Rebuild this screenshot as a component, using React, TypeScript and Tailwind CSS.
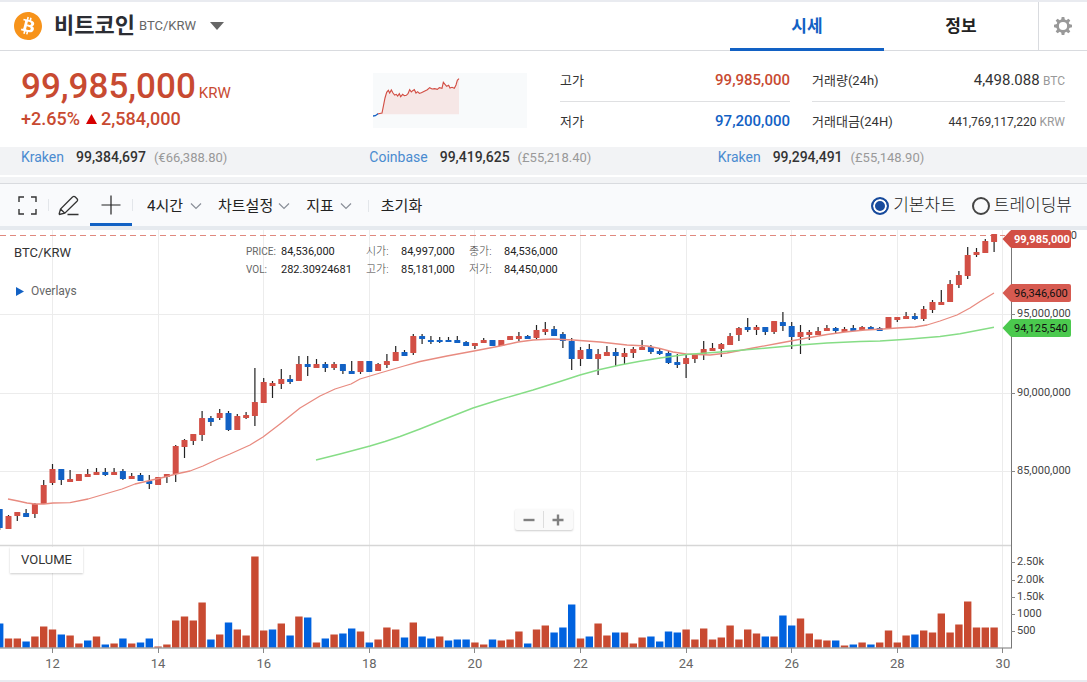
import { SiBitcoin } from "react-icons/si";

// side, body top, body bottom, wick top, wick bottom
type Candle = ["r" | "b", number, number, number, number];

const STEP = 8.8;
const BASE_Y = 647.5;

const candles: Candle[] = [
  ["b", 509, 528, 509, 530], ["r", 516, 529, 515, 529], ["r", 512, 516, 512, 521], ["b", 513, 517, 509, 517],
  ["r", 504, 514, 503, 518], ["r", 485, 504, 480, 504], ["r", 469, 483, 464, 485], ["b", 469, 480, 469, 485],
  ["r", 479, 482, 470, 482], ["r", 474, 481, 474, 481], ["r", 474, 477, 469, 477], ["r", 472, 475, 468, 475],
  ["b", 472, 475, 468, 476], ["r", 472, 475, 468, 475], ["b", 471, 479, 469, 480], ["r", 476, 479, 473, 479],
  ["b", 475, 481, 473, 481], ["b", 481, 484, 475, 489], ["r", 477, 485, 477, 485], ["r", 474, 477, 474, 483],
  ["r", 446, 474, 445, 482], ["r", 440, 447, 439, 458], ["r", 434, 441, 434, 445], ["r", 418, 435, 411, 441],
  ["b", 418, 422, 416, 426], ["r", 413, 418, 409, 420], ["b", 413, 430, 411, 431], ["r", 416, 430, 414, 430],
  ["r", 415, 418, 412, 419], ["r", 402, 416, 368, 426], ["r", 382, 403, 378, 403], ["r", 383, 386, 381, 398],
  ["r", 379, 384, 369, 389], ["b", 379, 382, 375, 384], ["r", 364, 381, 356, 381], ["b", 364, 367, 356, 376],
  ["r", 364, 368, 359, 368], ["b", 364, 368, 362, 372], ["r", 364, 368, 362, 370], ["b", 364, 371, 364, 374],
  ["b", 371, 374, 361, 374], ["r", 361, 372, 361, 374], ["b", 361, 372, 361, 372], ["r", 364, 371, 363, 371],
  ["r", 361, 365, 354, 368], ["r", 352, 361, 346, 361], ["b", 352, 356, 350, 356], ["r", 336, 353, 334, 355],
  ["b", 336, 339, 334, 344], ["b", 340, 342, 336, 344], ["b", 340, 342, 337, 343], ["b", 340, 342, 337, 342],
  ["b", 340, 343, 336, 343], ["b", 342, 346, 341, 346], ["r", 343, 346, 343, 349], ["r", 340, 343, 338, 343],
  ["b", 340, 346, 340, 346], ["r", 340, 346, 340, 346], ["r", 336, 340, 336, 340], ["r", 336, 339, 332, 341],
  ["b", 336, 339, 335, 339], ["r", 330, 338, 325, 339], ["r", 329, 332, 322, 335], ["b", 329, 336, 326, 336],
  ["b", 334, 341, 332, 348], ["b", 341, 359, 338, 370], ["r", 350, 359, 347, 366], ["b", 349, 359, 344, 359],
  ["r", 354, 359, 349, 375], ["r", 352, 356, 346, 356], ["b", 352, 356, 348, 366], ["r", 353, 357, 348, 364],
  ["r", 349, 353, 347, 358], ["r", 347, 350, 340, 350], ["b", 347, 352, 345, 354], ["b", 351, 354, 349, 355],
  ["b", 353, 363, 351, 364], ["b", 362, 365, 354, 368], ["r", 358, 364, 355, 378], ["r", 354, 359, 354, 363],
  ["r", 349, 354, 341, 360], ["r", 348, 351, 343, 351], ["r", 344, 349, 343, 357], ["r", 336, 345, 333, 345],
  ["r", 328, 335, 327, 341], ["b", 327, 330, 318, 332], ["r", 327, 330, 325, 335], ["b", 327, 332, 327, 335],
  ["r", 321, 332, 321, 334], ["b", 322, 326, 312, 331], ["b", 326, 337, 322, 349], ["r", 332, 337, 325, 354],
  ["r", 332, 335, 330, 340], ["r", 331, 335, 327, 335], ["r", 328, 331, 325, 331], ["b", 328, 331, 327, 334],
  ["r", 329, 332, 327, 332], ["b", 328, 331, 325, 331], ["r", 327, 330, 326, 331], ["b", 327, 330, 326, 330],
  ["b", 328, 331, 327, 331], ["r", 317, 329, 317, 329], ["r", 317, 320, 317, 322], ["r", 316, 319, 312, 319],
  ["b", 316, 319, 313, 320], ["r", 309, 319, 306, 321], ["r", 302, 310, 300, 313], ["r", 302, 305, 290, 305],
  ["r", 284, 302, 280, 302], ["r", 275, 285, 271, 288], ["r", 255, 276, 247, 279], ["r", 252, 255, 248, 257],
  ["r", 241, 253, 239, 253], ["r", 234, 242, 234, 252],
];

const volumes = (
  "b24 r9 r9 b6 r11 r21 r18 b13 r12 r4 b7 r11 b3 r4 b9 r4 b5 b9 r1 r3 r27 r31 r27 r45 b8 r13 b25 r18 r12 r91 " +
  "r17 b18 r24 b12 r31 b30 r5 b9 r13 b14 b19 r16 b5 r8 r20 r18 b10 r25 b11 b9 r11 b7 b8 b8 r5 r3 b8 r7 r8 r16 " +
  "b4 r18 r22 b15 b20 b43 r9 b11 r24 r12 b15 r15 r4 r10 b11 b6 b16 b15 r18 r8 r19 r8 r10 r22 r8 r18 r14 b11 r11 b32 " +
  "b22 r29 r14 r8 r7 b7 r2 b3 r5 b3 r5 r17 r5 r12 b13 r17 r15 r34 r15 r23 r46 r20 r20 r20"
).split(" ");

const maShort =
  "8,499 18,501 27,503 35,504 44,504 53,503 70,502.7 88,499 105,494 122,489 135,484 152,480 165,477 176,474 190,471 203,466 218,459 230,454 250,445 263,437 280,424 300,408 320,396 335,389 351,384 360,379 380,373 404,366 420,361.5 447,356 474,351 500,346 518,342 533,340 553,339 573,340 600,342 627,345 647,346 660,348.5 673,352 686,354 710,355 727,353 753,348 780,343 807,338 827,334.5 845,332 865,330 883,329 897,328 915,327 927,325 940,321 957,315 970,308 980,301.5 994,293";
const maLong =
  "316,460 340,454 370,446 385,441.5 400,436.5 420,429 445,419 473,408 500,399.5 533,390 560,381.5 580,375 600,369.5 620,365 640,361.3 660,358 686,354.5 720,352 767,348 800,345 827,343 860,341.5 880,341 907,339.3 940,336.5 960,333.7 994,327.3";

const days = [12, 14, 16, 18, 20, 22, 24, 26, 28, 30];
const priceTicks = [
  { y: 236, label: "100,000,000" },
  { y: 314, label: "95,000,000" },
  { y: 393, label: "90,000,000" },
  { y: 471, label: "85,000,000" },
];
const volumeTicks = [
  { y: 562, label: "2.50k" },
  { y: 580, label: "2.00k" },
  { y: 597, label: "1.50k" },
  { y: 614, label: "1000" },
  { y: 631, label: "500" },
];
const tags = [
  { y: 239, label: "99,985,000", fill: "#d24f45", text: "#ffffff", weight: 700 },
  { y: 293, label: "96,346,600", fill: "#d65a50", text: "#111111", weight: 400 },
  { y: 328, label: "94,125,540", fill: "#4bc94e", text: "#111111", weight: 400 },
];

const exchanges = [
  { name: "Kraken", price: "99,384,697", local: "(€66,388.80)" },
  { name: "Coinbase", price: "99,419,625", local: "(£55,218.40)" },
  { name: "Kraken", price: "99,294,491", local: "(£55,148.90)" },
];

const quotes = [
  [
    { label: "시가:", value: "84,997,000" },
    { label: "종가:", value: "84,536,000" },
  ],
  [
    { label: "고가:", value: "85,181,000" },
    { label: "저가:", value: "84,450,000" },
  ],
];

function Chevron() {
  return (
    <svg className="h-3 w-3 shrink-0" viewBox="0 0 12 12" fill="none" stroke="#8a8f98" strokeWidth="1.2" aria-hidden="true">
      <path d="M1 3.5l5 5 5-5" />
    </svg>
  );
}

function Gear() {
  return (
    <svg className="h-5 w-5" viewBox="-10 -10 20 20" fill="none" stroke="#999999" aria-hidden="true">
      <circle r="5.4" strokeWidth="2.6" />
      {[0, 45, 90, 135, 180, 225, 270, 315].map((a) => (
        <path key={a} d="M-1.9 -6L-1.3 -9H1.3L1.9 -6Z" fill="#999999" stroke="none" transform={`rotate(${a})`} />
      ))}
    </svg>
  );
}

function Header() {
  return (
    <header className="flex h-[51px] border-t-2 border-b border-t-[#e9ebf0] border-b-[#d9dbdf]">
      <div className="flex flex-1 items-center pl-[14px]">
        <SiBitcoin className="h-7 w-7 shrink-0 text-[#f7931a]" aria-hidden="true" />
        <h1 className="ml-3 text-[22px] leading-7 font-bold text-[#2b2d33]">비트코인</h1>
        <span className="ml-1 text-[13px] text-[#666666]">BTC/KRW</span>
        <button type="button" aria-label="코인 선택" className="ml-[14px]">
          <svg className="h-2 w-[14px]" viewBox="0 0 14 8" aria-hidden="true">
            <path d="M0 0H14L7 8Z" fill="#666666" />
          </svg>
        </button>
      </div>
      <nav className="-mb-px flex text-[17px] font-bold">
        <a href="#price" className="flex w-[154px] items-center justify-center border-b-3 border-[#1261c4] pt-[3px] text-[#1261c4]">
          시세
        </a>
        <a href="#info" className="flex w-[154px] items-center justify-center text-[#222222]">
          정보
        </a>
      </nav>
      <button type="button" aria-label="설정" className="flex w-[49px] items-center justify-center border-l border-[#d9dbdf]">
        <Gear />
      </button>
    </header>
  );
}

function Sparkline() {
  const line =
    "52,163 66,160 70,140 75,115 80,98 85,92 89,100 94,91 99,100 104,106 109,104 113,109 118,102 122,111 128,104 133,108 139,107 144,102 149,90 154,97 158,93 163,90 168,100 173,96 178,101 184,99 190,96 196,93 202,90 209,84 216,88 224,87 232,89 238,84 246,86 250,68 255,74 260,80 266,77 270,85 276,83 283,86 288,76 292,62 297,57";
  return (
    <svg className="mt-[22px] h-[55px] w-[154px] shrink-0 bg-[#f8fafb]" viewBox="39 40 462 165" fill="none" aria-hidden="true">
      <polygon points={`${line} 297,164 52,164`} fill="#f6e7e6" />
      <polyline points={line} stroke="#d24f45" strokeWidth="3.4" />
      <path d="M39 169L46 168L54 162" stroke="#1261c4" strokeWidth="4" />
    </svg>
  );
}

function Summary() {
  return (
    <section className="flex items-start pr-[22px] pb-[6px] pl-[21px]">
      <div className="w-[352px] shrink-0 pt-4 text-[#c84a31]">
        <p className="flex h-10 items-baseline gap-[3px]">
          <strong className="text-[35px] leading-10 font-medium">99,985,000</strong>
          <span className="text-[15px] leading-none">KRW</span>
        </p>
        <p className="flex items-center text-lg leading-6 font-medium">
          +2.65%
          <svg className="mr-1 ml-[6px] h-[10px] w-[11px]" viewBox="0 0 11 10" aria-hidden="true">
            <path d="M5.5 0L11 10H0Z" fill="#d60000" />
          </svg>
          2,584,000
        </p>
      </div>
      <Sparkline />
      <div className="mt-[9px] ml-[33px] grid flex-1 grid-cols-[10fr_11fr] gap-x-[22px] text-[13px] text-[#333333]">
        <dl>
          <div className="flex h-[42px] items-center justify-between border-b border-[#dfe0e2]">
            <dt>고가</dt>
            <dd className="text-[15px] font-medium text-[#c84a31]">99,985,000</dd>
          </div>
          <div className="flex h-[39px] items-center justify-between">
            <dt>저가</dt>
            <dd className="text-[15px] font-medium text-[#1261c4]">97,200,000</dd>
          </div>
        </dl>
        <dl>
          <div className="flex h-[42px] items-center justify-between border-b border-[#dfe0e2]">
            <dt>거래량(24h)</dt>
            <dd>
              <span className="text-[15px]">4,498.088</span> <span className="text-xs text-[#999999]">BTC</span>
            </dd>
          </div>
          <div className="flex h-[39px] items-center justify-between">
            <dt>거래대금(24H)</dt>
            <dd className="text-xs">
              441,769,117,220 <span className="text-[#999999]">KRW</span>
            </dd>
          </div>
        </dl>
      </div>
    </section>
  );
}

function Toolbar() {
  return (
    <div className="flex h-[47px] items-stretch border-t border-b-4 border-t-[#d9dbdf] border-b-[#e6eaef] bg-[#f9fafc] pr-[15px] pl-[7px] text-[15px] text-[#222222]">
      <button type="button" aria-label="전체화면" className="flex w-[41px] items-center justify-center">
        <svg className="h-[19px] w-[19px]" viewBox="0 0 19 19" fill="none" stroke="#333333" strokeWidth="1.4" aria-hidden="true">
          <path d="M1 6V1H6M13 1H18V6M18 13V18H13M6 18H1V13" />
        </svg>
      </button>
      <span className="h-3 w-px self-center bg-[#e3e6ea]" />
      <button type="button" aria-label="그리기" className="flex w-[41px] items-center justify-center pr-[2px]">
        <svg className="h-[21px] w-[21px]" viewBox="0 0 21 21" fill="none" stroke="#333333" strokeWidth="1.3" aria-hidden="true">
          <path d="M1 19.5L2.5 14L14.5 2Q16 .7 17.3 2L19 3.7Q20.2 5 19 6.3L6.8 18.2L1 19.5M2.5 14L6.8 18.2M9.5 19.5H20.5" />
        </svg>
      </button>
      <button type="button" aria-label="십자선" className="flex w-[42px] items-center justify-center border-b-3 border-[#1261c4] pt-[3px]">
        <svg className="h-5 w-5" viewBox="0 0 20 20" stroke="#222222" strokeWidth="1.2" aria-hidden="true">
          <path d="M10 .5V19.5M.5 10H19.5" />
        </svg>
      </button>
      <span className="h-3 w-px self-center bg-[#e3e6ea]" />
      <div className="flex items-center pt-[2px] pl-[14px]">
        <label className="flex items-center gap-[6px]">
          <select aria-label="시간 간격" defaultValue="4h" className="appearance-none bg-transparent">
            <option value="4h">4시간</option>
          </select>
          <Chevron />
        </label>
        <button type="button" aria-haspopup="menu" className="ml-4 flex items-center gap-[5px]">
          차트설정
          <Chevron />
        </button>
        <button type="button" aria-haspopup="menu" className="ml-4 flex items-center gap-[6px]">
          지표
          <Chevron />
        </button>
        <span className="ml-4 h-3 w-px bg-[#e3e6ea]" />
        <button type="button" className="ml-3">
          초기화
        </button>
      </div>
      <div className="ml-auto flex items-center gap-4 pt-[2px] text-[17px] font-light">
        <label className="flex items-center gap-1">
          <input
            type="radio"
            name="chart"
            defaultChecked
            className="h-[18px] w-[18px] appearance-none rounded-full border-2 border-[#333333] checked:border-[#174a9c] checked:bg-[#174a9c] checked:shadow-[inset_0_0_0_2px_#fff]"
          />
          기본차트
        </label>
        <label className="flex items-center gap-1">
          <input
            type="radio"
            name="chart"
            className="h-[18px] w-[18px] appearance-none rounded-full border-2 border-[#444444] checked:border-[#174a9c] checked:bg-[#174a9c] checked:shadow-[inset_0_0_0_2px_#fff]"
          />
          트레이딩뷰
        </label>
      </div>
    </div>
  );
}

function Plot() {
  return (
    <svg className="block h-auto w-full" viewBox="0 230 1087 450" fontFamily="Roboto, sans-serif" role="img" aria-label="BTC/KRW 차트">
      {/* grid */}
      <g stroke="#ececec" shapeRendering="crispEdges">
        {days.map((d, i) => (
          <path key={d} d={`M${Math.round(52 + i * STEP * 12) + 0.5} 230V648`} />
        ))}
        {priceTicks.slice(1).map((t) => (
          <path key={t.label} d={`M0 ${t.y + 0.5}H1011`} />
        ))}
      </g>
      <path d="M0 545.5H1011" stroke="#d6d6d6" strokeWidth="1.5" />
      <path d="M0 235.5H1005" stroke="#e0897f" strokeDasharray="6 4" />

      {/* volume */}
      {volumes.map((v, i) => {
        const h = Number(v.slice(1));
        return (
          <rect
            key={i}
            x={i * STEP - 4}
            y={BASE_Y - h}
            width="7.4"
            height={h}
            fill={v[0] === "r" ? "#c84a31" : "#0062df"}
          />
        );
      })}

      {/* candles */}
      {candles.map(([side, top, bottom, high, low], i) => (
        <g key={i}>
          <path d={`M${i * STEP - 0.3} ${high}V${low}`} stroke="#222222" strokeWidth="1.2" />
          <rect
            x={i * STEP - 3.3}
            y={top}
            width="6"
            height={bottom - top}
            rx="0.6"
            fill={side === "r" ? "#d24f45" : "#1261c4"}
          />
        </g>
      ))}
      <polyline points={maShort} fill="none" stroke="#e88b80" strokeWidth="1.3" strokeLinejoin="round" />
      <polyline points={maLong} fill="none" stroke="#86dd86" strokeWidth="1.4" strokeLinejoin="round" />

      {/* axes */}
      <path d="M1011.5 230V648M0 648H1012" stroke="#777777" fill="none" />
      <g fontSize="13" fill="#666666" textAnchor="middle">
        {days.map((d, i) => (
          <g key={d}>
            <path d={`M${Math.round(52 + i * STEP * 12) + 0.5} 648v5`} stroke="#888888" />
            <text x={52.5 + i * STEP * 12} y="668">{d}</text>
          </g>
        ))}
      </g>
      <g fontSize="11" fill="#444444">
        {[...priceTicks, ...volumeTicks].map((t) => (
          <g key={t.label}>
            <path d={`M1011 ${t.y + 0.5}h4`} stroke="#888888" />
            <text x="1017" y={t.y + 3}>{t.label}</text>
          </g>
        ))}
      </g>
      {tags.map((t) => (
        <g key={t.label}>
          <path
            d={`M1002.5 ${t.y}L1010 ${t.y - 8}Q1011 ${t.y - 9} 1012 ${t.y - 9}H1069Q1071 ${t.y - 9} 1071 ${t.y - 7}V${t.y + 7}Q1071 ${t.y + 9} 1069 ${t.y + 9}H1012Q1011 ${t.y + 9} 1010 ${t.y + 8}Z`}
            fill={t.fill}
          />
          <text x="1014" y={t.y + 4} fontSize="11" fontWeight={t.weight} fill={t.text}>
            {t.label}
          </text>
        </g>
      ))}
    </svg>
  );
}

function Chart() {
  return (
    <section className="relative border-b-2 border-[#e9ebf0]">
      <Plot />
      <div className="absolute top-[14px] left-[14px] text-[13px] leading-[18px] text-[#333333]">BTC/KRW</div>
      <button type="button" className="absolute top-[52px] left-4 flex items-center gap-[7px] text-xs leading-[18px] text-[#666666]">
        <svg className="h-[9px] w-2" viewBox="0 0 8 9" aria-hidden="true">
          <path d="M0 0L8 4.5L0 9Z" fill="#1261c4" />
        </svg>
        Overlays
      </button>
      <div className="absolute top-[13px] left-[246px] flex text-[11px] leading-[18px] text-[#222222]">
        <dl className="grid w-[120px] grid-cols-[35px_1fr]">
          <dt className="text-[10px] text-[#666666]">PRICE:</dt>
          <dd>84,536,000</dd>
          <dt className="text-[10px] text-[#666666]">VOL:</dt>
          <dd>282.30924681</dd>
        </dl>
        <div>
          {quotes.map((row) => (
            <dl key={row[0].label} className="flex">
              {row.map((q) => (
                <div key={q.label} className="flex w-[103px]">
                  <dt className="w-[35px] font-light text-[#444444]">{q.label}</dt>
                  <dd>{q.value}</dd>
                </div>
              ))}
            </dl>
          ))}
        </div>
      </div>
      <div className="absolute top-[279px] left-1/2 flex h-[21px] w-[58px] -translate-x-1/2 items-center rounded-xs bg-[#fafafa] shadow-[0_1px_2px_rgba(0,0,0,0.2)]">
        <button type="button" aria-label="축소" className="flex h-full flex-1 items-center justify-center">
          <svg className="h-3 w-3" viewBox="0 0 12 12" stroke="#808080" strokeWidth="2.4" aria-hidden="true">
            <path d="M.5 6H11.5" />
          </svg>
        </button>
        <span className="h-[17px] w-px bg-[#dddddd]" />
        <button type="button" aria-label="확대" className="flex h-full flex-1 items-center justify-center">
          <svg className="h-3 w-3" viewBox="0 0 12 12" stroke="#808080" strokeWidth="2.4" aria-hidden="true">
            <path d="M.5 6H11.5M6 .5V11.5" />
          </svg>
        </button>
      </div>
      <div className="absolute top-[317px] left-[10px] bg-white px-[11px] text-[13px] leading-[26px] text-[#333333] shadow-[0_1px_2px_rgba(0,0,0,0.2)]">
        VOLUME
      </div>
    </section>
  );
}

export default function App() {
  return (
    <main className="bg-white font-[Roboto,'Noto_Sans_CJK_KR',sans-serif]">
      <Header />
      <Summary />
      <ul className="grid h-7 grid-cols-3 bg-[#f2f3f5] px-[21px] text-sm leading-5">
        {exchanges.map((e) => (
          <li key={e.price} className="flex items-baseline">
            <span className="text-[#4a8bd0]">{e.name}</span>
            <span className="ml-3 font-medium text-[#333333]">{e.price}</span>
            <span className="ml-2 text-[13px] text-[#999999]">{e.local}</span>
          </li>
        ))}
      </ul>
      <div className="mt-[2px] h-[6px] bg-[#f2f3f5]" />
      <Toolbar />
      <Chart />
    </main>
  );
}
